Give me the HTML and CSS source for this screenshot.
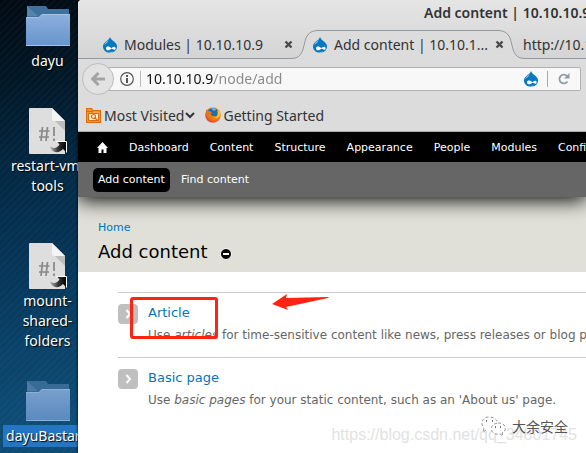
FILE: index.html
```html
<!DOCTYPE html>
<html lang="en">
<head>
<meta charset="utf-8">
<title>Add content | 10.10.10.9</title>
<link rel="stylesheet" href="styles.css">
</head>
<body>
<svg class="defs" aria-hidden="true">
  <defs>
    <linearGradient id="folderFill" x1="0" y1="0" x2="0" y2="1"><stop offset="0" stop-color="#8db0dd"/><stop offset="1" stop-color="#6694cb"/></linearGradient>
    <linearGradient id="arrowFill" x1="0" y1="0" x2="1" y2="0"><stop offset="0" stop-color="#bbb"/><stop offset=".5" stop-color="#333"/><stop offset="1" stop-color="#000"/></linearGradient>
    <radialGradient id="foxFill" cx=".65" cy=".3" r=".8"><stop offset="0" stop-color="#ffd42a"/><stop offset=".5" stop-color="#f68b1e"/><stop offset="1" stop-color="#d8382a"/></radialGradient>
  </defs>
  <symbol id="folder" viewBox="0 0 44 40">
    <path d="M1 0h19l2 3h21v12H1z" fill="#40719d"/>
    <path d="M1 0l11 10H1z" fill="#5584ae"/>
    <path d="M0 11h13l3-3h28v32H0z" fill="url(#folderFill)"/>
    <path d="M0 11.500h13l3-3h28M0 39.500h44" fill="none" stroke="#a4c2e8"/>
  </symbol>
  <symbol id="script" viewBox="0 0 38 46">
    <path d="M1 0h22l13 13v33H1q-1 0-1-1V1q0-1 1-1z" fill="#dedede"/>
    <path d="M26 13h10v10z" fill="#bdbdbd"/>
    <path d="M23 0v11q0 2 2 2h11z" fill="#f4f4f4"/>
    <path d="M13.500 19l-1.500 14M18.500 19l-1.500 14M10 23h10.500M10 29h10M25 19v9M25 30.500v2.500" fill="none" stroke="#888" stroke-width="1.700"/>
    <path d="M28 33.500h9.500v11l-3.500-3.500c-4 5-12 4-13-3 3 3 7 2.500 9.500-1.500z" fill="url(#arrowFill)"/>
    <path d="M27 33.500h10.500v11" fill="none" stroke="#fff"/>
  </symbol>
  <symbol id="drop" viewBox="0 0 14 16">
    <path d="M7 0c.8 2.500 2.500 3.200 4.300 4.700C13.200 6.200 14 7.800 14 9.600c0 3.600-3 6.200-7 6.200s-7-2.600-7-6.200c0-1.800.8-3.400 2.700-4.900C4.500 3.200 6.300 2.500 7 0z" fill="#0678be"/>
    <path d="M5.500 3.300C3.500 5 1.500 6.100 1.200 8.300 3 6.500 5.200 6 5.500 3.300z" fill="#83bfe3"/>
    <path d="M3 11.500c0-2.500 3.300-2.600 5.300-.3 1-1.300 3.800-2.600 4.300-.3.300 2-1.600 2.500-3 1.200-1.200-1-1.500-.2-2.800.7-1.600 1-3.800.6-3.800-1.300zM6 14.400c1 .7 2.700.7 3.700-.1-.5 1.500-3 1.500-3.700.1z" fill="#fff"/>
  </symbol>
  <symbol id="close" viewBox="0 0 9 9"><path d="M1.500 1.500l6 6m0-6l-6 6" stroke="#4a4a4a" stroke-width="2.400"/></symbol>
  <symbol id="curve" viewBox="0 0 28 30">
    <path d="M0 30v-1.500c8 0 11-4 13-13C15 5 18 .5 28 .5V30z" fill="#dcdcdc"/>
    <path d="M0 28.500c8 0 11-4 13-13C15 5 18 .5 28 .5" fill="none" stroke="#92999f"/>
  </symbol>
  <symbol id="bullet" viewBox="0 0 20 20"><rect width="20" height="20" rx="4" fill="#bfbfbf"/><path d="M8.500 6l3.500 4-3.500 4" fill="none" stroke="#fff" stroke-width="2"/></symbol>
</svg>

<div class="screen">
  <nav class="desktop" aria-label="Desktop">
    <a class="shortcut" href="#"><svg class="folder"><use href="#folder"/></svg><span>dayu</span></a>
    <a class="shortcut" href="#"><svg class="script"><use href="#script"/></svg><span>restart-vm-<br>tools</span></a>
    <a class="shortcut" href="#"><svg class="script"><use href="#script"/></svg><span>mount-<br>shared-<br>folders</span></a>
    <a class="shortcut selected" href="#"><svg class="folder"><use href="#folder"/></svg><span>dayuBastard</span></a>
  </nav>

  <div class="window">
    <header class="chrome">
      <div class="titlebar">Add content | 10.10.10.9</div>
      <div class="tabs">
        <div class="tab">
          <svg class="favicon"><use href="#drop"/></svg><span class="tab-name">Modules | 10.10.10.9</span>
          <button class="close" aria-label="Close tab"><svg><use href="#close"/></svg></button>
        </div>
        <div class="tab active">
          <svg class="curve left"><use href="#curve"/></svg><svg class="curve right"><use href="#curve"/></svg>
          <svg class="favicon"><use href="#drop"/></svg><span class="tab-name">Add content | 10.10.1...</span>
          <button class="close" aria-label="Close tab"><svg><use href="#close"/></svg></button>
        </div>
        <div class="tab"><span class="tab-name">http://10.10.10.9</span></div>
      </div>
      <div class="toolbar">
        <button class="back" aria-label="Back"><svg viewBox="0 0 14 14"><path d="M7.500 1L1.500 7l6 6M2 7h12" fill="none" stroke="#a3a3a3" stroke-width="3"/></svg></button>
        <div class="address">
          <svg class="info" viewBox="0 0 14 14"><circle cx="7" cy="7" r="6.300" fill="none" stroke="#555" stroke-width="1.200"/><path d="M7 6v5M7 3v2" stroke="#444" stroke-width="1.800"/></svg>
          <input class="url" type="text" aria-label="Address" value="10.10.10.9/node/add">
          <svg class="favicon"><use href="#drop"/></svg>
          <button class="reload" aria-label="Reload"><svg viewBox="0 0 12 12"><path d="M9.500 8.500A4.400 4.400 0 1 1 9 3" fill="none" stroke="#929ba5" stroke-width="1.800"/><path d="M11.500 0v5.500H6z" fill="#929ba5"/></svg></button>
        </div>
      </div>
      <div class="bookmarks">
        <a href="#"><svg class="visited" viewBox="0 0 15 15"><path d="M.6 14.400V.600h5l1.500 2h7.300v11.800z" fill="#f6a653" stroke="#d96c0b" stroke-width="1.200"/><path d="M2.500 12.500v-7h10v7z" fill="#fff0dc" stroke="#d96c0b"/><circle cx="7.500" cy="8.500" r="2" fill="none" stroke="#d96c0b" stroke-width="1.200"/><path d="M9 10l3 3M1 3.500h6" stroke="#d96c0b" stroke-width="1.300"/></svg>Most Visited<svg class="chevron" viewBox="0 0 10 7"><path d="M1 1l4 4 4-4" fill="none" stroke="#333" stroke-width="2"/></svg></a>
        <a href="#"><svg class="firefox" viewBox="0 0 16 16"><circle cx="8" cy="8" r="7.800" fill="url(#foxFill)"/><path d="M3 3.500C5 .5 10 0 12.500 3c1.500 2 1 5-1 6.500L7 9 4.500 6z" fill="#236bb0"/><path d="M6 1.500c2-1 4-.5 5.500 1L9 4z" fill="#5fb9e7"/><path d="M1 2.500l2 1.500 3 .5 1 1.500-2 1.500c0 2 2 2.500 4.500 2-1 2-5 3-7 0-.5-2-2-4-1.500-7z" fill="#ee7219"/><path d="M12 3.500c1.500 3 .5 6-2 7.500 3 0 4.500-1.500 5-4-.5-2-1.500-3-3-3.500z" fill="#ffc72b"/></svg>Getting Started</a>
      </div>
    </header>

    <nav class="admin" aria-label="Administration">
      <a href="#" aria-label="Home"><svg class="home" viewBox="0 0 11 11"><path d="M5.500 0L11 6H9.500v5h-3V7.500h-2V11h-3V6H0z" fill="#fff"/></svg></a>
      <a href="#">Dashboard</a><a href="#">Content</a><a href="#">Structure</a><a href="#">Appearance</a><a href="#">People</a><a href="#">Modules</a><a href="#">Configuration</a>
    </nav>
    <nav class="shortcuts" aria-label="Shortcuts">
      <a class="current" href="#">Add content</a><a href="#">Find content</a>
    </nav>

    <div class="branding">
      <a class="crumb" href="#">Home</a>
      <div class="heading">
        <h1>Add content</h1>
        <button class="remove" aria-label="Remove from shortcuts"><svg viewBox="0 0 12 12"><circle cx="6" cy="6" r="5.500" fill="#000" stroke="#fff"/><path d="M3 6h6" stroke="#fff" stroke-width="2"/></svg></button>
      </div>
    </div>

    <main class="content">
      <section class="type">
        <svg class="bullet"><use href="#bullet"/></svg>
        <div>
          <a href="#">Article</a>
          <p>Use <em>articles</em> for time-sensitive content like news, press releases or blog posts.</p>
        </div>
        <div class="highlight"></div>
        <svg class="pointer" viewBox="0 0 57 18"><path d="M0 11L15 1l-1 4 42-1c1 0 1 1 0 1L14 14l2 3z" fill="#ff2412"/></svg>
      </section>
      <section class="type">
        <svg class="bullet"><use href="#bullet"/></svg>
        <div>
          <a href="#">Basic page</a>
          <p>Use <em>basic pages</em> for your static content, such as an 'About us' page.</p>
        </div>
      </section>
    </main>
  </div>

  <div class="link-mark">https://blog.csdn.net/qq_34801745</div>
  <div class="author-mark"><svg viewBox="0 0 25 20"><g fill="#fff" stroke="#777" stroke-width=".800" stroke-dasharray="3 2"><path d="M5 14l-3 2 1-4C-1 8 1 1 8 1c6 0 9 4 9 7"/><path d="M17 7c9 0 9 8 4 10l1 3-3-2C9 20 7 8 17 7z"/></g><path d="M5 5h1m5 0h1m2 6h1m4 0h1" stroke="#444" stroke-width="1.500"/></svg>大余安全</div>
</div>
</body>
</html>
```

FILE: styles.css
```css
* { box-sizing: border-box; }

body {
  margin: 0;
  font-family: "Noto Sans", sans-serif;
  font-size: 14px;
  color: #333;
}

a { color: inherit; text-decoration: none; }
button { padding: 0; border: 0; background: none; display: flex; align-items: center; justify-content: center; }
svg { display: block; flex: none; }
.defs { position: absolute; width: 0; height: 0; }

.screen {
  position: relative;
  display: grid;
  grid-template-columns: 78px minmax(0, 1fr);
  min-height: 100vh;
  overflow: hidden;
  background:
    repeating-linear-gradient(135deg, transparent 0 3px, rgba(90, 170, 220, 0.04) 3px 5px),
    linear-gradient(170deg, #020a12 0, #021522 15%, #042a46 40%, #07375a 60%, #0e4c75 90%);
  background-size: auto, 94px 100%;
}

/* Desktop shortcuts */
.desktop {
  display: grid;
  grid-template-rows: 105px 135px 135px auto;
  grid-template-columns: 95px;
  align-content: start;
  padding-top: 2px;
  overflow: hidden;
}
.shortcut {
  display: flex;
  flex-direction: column;
  align-items: center;
  color: #fff;
  line-height: 20px;
  text-align: center;
  text-shadow: 1px 1px 1px #000;
}
.script { width: 38px; height: 46px; margin: 1px 0 2px; }
.folder { width: 44px; height: 40px; margin: 4px 0 5px; }
.selected span { padding: 1px 3px; margin-top: -1px; background: #2476c2; }
.selected svg { opacity: 0.85; }

/* Browser window */
.window { background: #fff; overflow: hidden; border-top-left-radius: 4px; box-shadow: 0 0 3px #000; }
.chrome { position: relative; z-index: 2; background: linear-gradient(#e5e5e5, #d4d4d4 58px, #dcdcdc 59px); border-bottom: 1px solid #aaa; white-space: nowrap; }
.titlebar { height: 30px; padding-left: 346px; line-height: 26px; font-weight: 600; }

.tabs { display: flex; height: 29px; padding-left: 15px; border-bottom: 1px solid #92999f; }
.tab { position: relative; flex: none; width: 210px; height: 29px; padding: 0 10px; display: flex; align-items: center; gap: 7px; }
.tab > * { position: relative; }
.tab-name { flex: 1; }
.tab.active::before { content: ""; position: absolute; top: 0; bottom: 0; left: 15px; right: 15px; background: #dcdcdc; border-top: 1px solid #92999f; }
.tab .curve { position: absolute; top: 0; width: 28px; height: 30px; }
.curve.left { left: -12px; }
.curve.right { right: -12px; transform: scaleX(-1); }
.favicon { width: 14px; height: 16px; }
.close svg { width: 9px; height: 9px; }

.toolbar { display: flex; align-items: center; height: 40px; padding: 0 5px 0 4px; }
.back { position: relative; z-index: 1; flex: none; width: 32px; height: 32px; border: 1px solid #bdbdbd; border-radius: 50%; background: #e2e2e2; }
.back svg { width: 14px; height: 14px; }
.address { flex: 1; min-width: 0; display: flex; align-items: center; height: 24px; margin-left: -8px; padding: 0 10px 0 13px; border: 1px solid #b0b0b0; border-radius: 2px; background: #f8f8f8; }
.info { width: 14px; height: 14px; }
.url {
  flex: 1;
  min-width: 0;
  height: 16px;
  margin-left: 6px;
  padding: 0 0 0 5px;
  border: 0;
  border-left: 1px solid #bbb;
  font: inherit;
  line-height: 16px;
  color: transparent;
  background: linear-gradient(to right, #111 73px, #888 73px);
  -webkit-background-clip: text;
  background-clip: text;
}
.reload { height: 16px; margin-left: 9px; padding-left: 10px; border-left: 1px solid #aaa; }
.reload svg { width: 12px; height: 12px; }

.bookmarks { display: flex; gap: 10px; height: 32px; padding-left: 8px; }
.bookmarks a { display: flex; align-items: center; }
.visited { width: 15px; height: 15px; margin-right: 3px; }
.firefox { width: 16px; height: 16px; margin-right: 2px; }
.chevron { width: 10px; height: 7px; margin-left: 1px; }

/* Admin menus */
.admin, .shortcuts, .branding, .content { font-family: "DejaVu Sans", sans-serif; font-size: 11px; }
.admin { position: relative; z-index: 1; display: flex; align-items: center; gap: 1px; height: 30px; padding-left: 9px; background: #000; color: #fff; white-space: nowrap; }
.admin a { padding: 0 10px; }
.home { width: 11px; height: 11px; }
.shortcuts { position: relative; display: flex; align-items: center; gap: 6px; height: 35px; padding-left: 15px; background: #666; color: #fff; box-shadow: 0 3px 20px #000; }
.shortcuts a { padding: 0 5px; line-height: 24px; border-radius: 5px; }
.shortcuts .current { background: #000; }

/* Page */
.branding { height: 75px; padding: 23px 20px 0; background: #e0e0d8; }
.crumb { display: block; line-height: 16px; color: #0074bd; }
.heading { display: flex; align-items: center; gap: 12px; padding-top: 4px; }
h1 { margin: 0; font-size: 18px; font-weight: 400; line-height: 24px; color: #000; }
.remove { padding-top: 4px; }
.remove svg { width: 12px; height: 12px; }

.content { padding: 20px 0 0 40px; }
.type { position: relative; display: flex; gap: 10px; height: 65px; padding-top: 11px; border-top: 1px solid #ccc; white-space: nowrap; }
.bullet { width: 20px; height: 20px; }
.type a { display: block; padding-top: 1px; font-size: 13px; line-height: 16px; color: #0074bd; }
.type p { margin: 6px 0 0; font-size: 12px; line-height: 16px; color: #666; }
.highlight { position: absolute; left: 12px; top: 4px; width: 88px; height: 42px; border: 3px solid #ff2412; border-radius: 3px; }
.pointer { position: absolute; left: 154px; top: 0; width: 57px; height: 18px; }

/* Watermarks */
.link-mark { position: absolute; right: 9px; bottom: 8px; font-family: "Liberation Sans", sans-serif; font-size: 16px; line-height: 20px; color: #e2e2e2; }
.author-mark { position: absolute; right: 18px; bottom: 17px; display: flex; align-items: center; gap: 6px; font-family: "Noto Sans CJK SC", sans-serif; line-height: 20px; color: #555; }
.author-mark svg { width: 25px; height: 20px; }
```
